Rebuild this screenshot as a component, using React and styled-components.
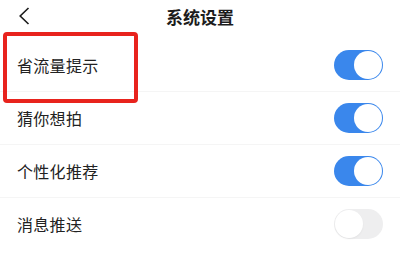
import React from 'react'
import styled, { createGlobalStyle } from 'styled-components'

const GlobalStyle = createGlobalStyle`
  html, body {
    margin: 0;
    padding: 0;
    background: #ffffff;
  }
  body {
    font-family: 'Noto Sans CJK SC', 'Noto Sans', sans-serif;
  }
`

const Page = styled.div`
  position: relative;
  width: 400px;
  height: 255px;
  overflow: hidden;
  background: #ffffff;
`

const Header = styled.header`
  height: 32px;
  display: grid;
  grid-template-columns: 1fr auto 1fr;
  align-items: center;
  padding: 0 17px;
`

const Title = styled.h1`
  margin: 0;
  font-size: 17px;
  font-weight: 700;
  color: #1c1c1c;
`

const BackButton = styled.button`
  justify-self: start;
  width: 14px;
  height: 20px;
  padding: 0;
  border: none;
  background: none;
  display: flex;
  align-items: center;
  justify-content: center;
`

const List = styled.div`
  padding-top: 7px;
`

const Row = styled.div`
  height: 53px;
  display: flex;
  align-items: center;
  justify-content: space-between;
  padding: 0 17px;
  box-sizing: border-box;
  border-bottom: 1px solid ${props => (props.$last ? 'transparent' : '#f5f5f5')};
`

const Label = styled.span`
  font-size: 16px;
  color: #222222;
  letter-spacing: 0.3px;
`

const Track = styled.div`
  width: 49px;
  height: 30px;
  padding: 1px;
  border-radius: 15px;
  box-sizing: border-box;
  display: flex;
  justify-content: ${props => (props.$on ? 'flex-end' : 'flex-start')};
  background: ${props => (props.$on ? '#3a87ec' : '#eeeeef')};
`

const Knob = styled.div`
  width: 28px;
  height: 28px;
  border-radius: 50%;
  background: #ffffff;
  box-shadow: ${props => (props.$on ? 'none' : '0 1px 2px rgba(0,0,0,0.05)')};
`

const Highlight = styled.div`
  position: absolute;
  left: 3px;
  top: 32px;
  width: 135px;
  height: 71px;
  box-sizing: border-box;
  border: 4px solid #e8231d;
  border-radius: 4px;
  pointer-events: none;
`

const Toggle = ({ on }) => (
  <Track $on={on}>
    <Knob $on={on} />
  </Track>
)

const items = [
  { label: '省流量提示', on: true },
  { label: '猜你想拍', on: true },
  { label: '个性化推荐', on: true },
  { label: '消息推送', on: false }
]

export default function App() {
  return (
    <Page>
      <GlobalStyle />
      <Header>
        <BackButton>
          <svg width="12" height="18" viewBox="0 0 12 18">
            <path d="M10.5 1 L2.2 9 L10.5 17" fill="none" stroke="#1c1c1c" strokeWidth="1.6" />
          </svg>
        </BackButton>
        <Title>系统设置</Title>
      </Header>
      <List>
        {items.map((item, i) => (
          <Row key={item.label} $last={i === items.length - 1}>
            <Label>{item.label}</Label>
            <Toggle on={item.on} />
          </Row>
        ))}
      </List>
      <Highlight />
    </Page>
  )
}
